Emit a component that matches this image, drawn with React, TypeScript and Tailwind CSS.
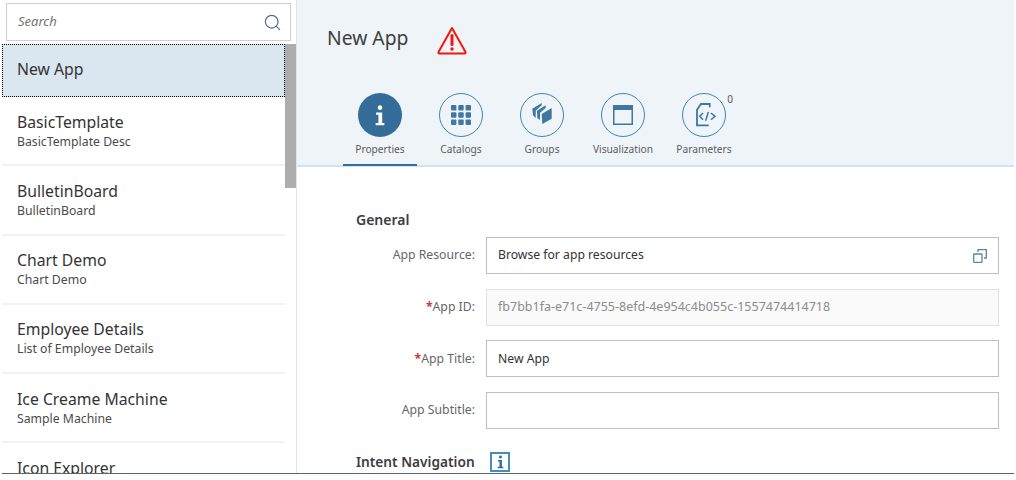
import React from 'react'
import { Search } from 'lucide-react'

const apps = [
  { title: 'BasicTemplate', sub: 'BasicTemplate Desc' },
  { title: 'BulletinBoard', sub: 'BulletinBoard' },
  { title: 'Chart Demo', sub: 'Chart Demo' },
  { title: 'Employee Details', sub: 'List of Employee Details' },
  { title: 'Ice Creame Machine', sub: 'Sample Machine' },
  { title: 'Icon Explorer', sub: '' },
]

function InfoGlyph({ className }: { className?: string }) {
  return (
    <svg viewBox="0 0 16 24" className={className} fill="currentColor">
      <circle cx="8" cy="3" r="2.6" />
      <path d="M3.500 8.500h7v12h2.500v2.500H3v-2.500h3.200v-9.500H3.500z" />
    </svg>
  )
}

function GridGlyph() {
  return (
    <svg viewBox="0 0 20 20" className="w-5 h-5" fill="currentColor">
      {[0, 7.3, 14.6].map((y) =>
        [0, 7.3, 14.6].map((x) => <rect key={`${x}-${y}`} x={x} y={y} width="5.4" height="5.4" rx="1" />),
      )}
    </svg>
  )
}

function GroupsGlyph() {
  return (
    <svg viewBox="0 0 34 34" className="w-[34px] h-[34px]" fill="currentColor">
      <path d="M7.300 10.700 16.700 5v2.300l-6 5.400v7.300l-2.700-2.700z" />
      <path d="M12 12.700 20.700 7.300v2.700l-5.700 4.700v7.300l-2.700-2z" />
      <path d="M16.700 16 26.700 10v10.700L17.300 26z" />
    </svg>
  )
}

function WindowGlyph() {
  return (
    <svg viewBox="0 0 20 20" className="w-5 h-5" fill="currentColor">
      <path d="M0 0h20v20H0zM1.500 5v13.500h17V5z" fillRule="evenodd" />
    </svg>
  )
}

function CodeGlyph() {
  return (
    <svg viewBox="0 0 34 34" className="w-[34px] h-[34px]" fill="none" stroke="currentColor" strokeWidth="1.800">
      <path d="M22.700 9.300V6H14l-4 5.700V27.300h11.700" />
      <path d="M16 15l-3.300 3.300L16 21.700M24 15l4 3.300-4 3.400M21.300 14l-2.600 8.700" strokeWidth="1.500" />
    </svg>
  )
}

const tabs = [
  { label: 'Properties', icon: <InfoGlyph className="w-[14px] h-[21px]" />, active: true },
  { label: 'Catalogs', icon: <GridGlyph /> },
  { label: 'Groups', icon: <GroupsGlyph /> },
  { label: 'Visualization', icon: <WindowGlyph /> },
  { label: 'Parameters', icon: <CodeGlyph />, count: 0 },
]

function Field({ label, required, value, muted, icon }: { label: string; required?: boolean; value?: string; muted?: boolean; icon?: boolean }) {
  return (
    <div className="flex items-center h-[37px]">
      <div className="w-[119px] text-right text-[12.25px] text-[#666666] shrink-0">
        {required && <span className="text-[#cc3b3b] font-bold">*</span>}
        {label}
      </div>
      <div className={`ml-[11px] w-[513px] h-[37px] border flex items-center justify-between pl-[11px] pr-[11px] ${muted ? 'text-[12.5px] bg-[#fafafa] border-[#e0e0e0] text-[#8c8c8c]' : 'text-[12.2px] bg-white border-[#bfbfbf] text-[#333333]'}`}>
        <span>{value}</span>
        {icon && (
          <svg viewBox="0 0 14 14" className="w-[14px] h-[14px] text-[#5b87a8]" fill="none" stroke="currentColor" strokeWidth="1.300">
            <rect x="0.700" y="5" width="8.300" height="8.300" rx="0.500" />
            <path d="M5 3V0.700h8.300V9H11" />
          </svg>
        )}
      </div>
    </div>
  )
}

export default function App() {
  return (
    <div className="w-[1016px] h-[480px] bg-white overflow-hidden font-['Noto_Sans',sans-serif] text-[#333333]">
      <div className="mx-[2px] h-[474px] flex border-b border-[#5a6470] overflow-hidden">
        <aside className="w-[295px] shrink-0 border-r border-[#e5e5e5] flex flex-col">
          <div className="pt-[3px] pl-[4px] pr-[4px] pb-[3px]">
            <div className="h-[38px] w-[285px] border border-[#cfcfcf] flex items-center justify-between pl-[11px] pr-[8px]">
              <span className="text-[13px] italic text-[#757575]">Search</span>
              <Search size={19} strokeWidth={1.5} className="text-[#4d6f8c]" />
            </div>
          </div>
          <div className="flex flex-1 min-h-0">
            <div className="w-[283px] shrink-0">
              <div className="h-[53px] bg-[#dbe7f0] border border-dotted border-black flex items-center pl-[14px] pb-[2px] text-[15.750px] text-[#333333]">
                New App
              </div>
              {apps.map((a) => (
                <div key={a.title} className="h-[69.300px] border-b-2 border-[#f2f2f2] pl-[15px] pt-[13.500px]">
                  <div className="text-[15.750px] leading-[22px] text-[#333333]">{a.title}</div>
                  <div className="text-[12.250px] leading-[17.500px] text-[#4a4a4a]">{a.sub}</div>
                </div>
              ))}
            </div>
            <div className="w-[11px] shrink-0">
              <div className="h-[144px] bg-[#adadad]" />
            </div>
          </div>
        </aside>

        <main className="flex-1 min-w-0">
          <header className="h-[167px] bg-[#eff4f9] border-b-2 border-[#d5e3f0]">
            <div className="flex items-center pl-[30px] pt-[24px] h-[84px]">
              <h1 className="text-[19.300px] text-[#3d3d3d] font-normal w-[110px] pb-[31px]">New App</h1>
              <svg viewBox="0 0 30 30" className="w-[30px] h-[30px] mb-[27px] text-[#f5170a]" fill="none" stroke="currentColor">
                <path d="M15 2 28.500 26a1 1 0 0 1-.8 1.500H2.300a1 1 0 0 1-.8-1.500z" strokeWidth="2" strokeLinejoin="round" />
                <path d="M15 9.500v9" strokeWidth="3" strokeLinecap="round" />
                <circle cx="15" cy="23" r="1.700" fill="currentColor" stroke="none" />
              </svg>
            </div>
            <nav className="flex pl-[46px] gap-[7px] pt-[9px]">
              {tabs.map((t) => (
                <div key={t.label} className={`w-[74px] h-[73px] flex flex-col items-center ${t.active ? 'border-b-2 border-[#346d9a]' : ''}`}>
                  <div className="relative">
                    <div className={`w-[44px] h-[44px] rounded-full flex items-center justify-center ${t.active ? 'bg-[#346d9a] text-white' : 'border border-[#4682b0] text-[#3f77a3]'}`}>
                      {t.icon}
                    </div>
                    {t.count !== undefined && <span className="absolute -right-[7px] top-[1px] text-[10px] leading-none text-[#555555]">{t.count}</span>}
                  </div>
                  <div className="mt-[4px] text-[10.200px] leading-[16px] text-[#5c5c5c] whitespace-nowrap">{t.label}</div>
                </div>
              ))}
            </nav>
          </header>

          <section className="pl-[59px] pt-[43px]">
            <h2 className="text-[14px] leading-[20px] font-semibold text-[#3d3d3d]">General</h2>
            <div className="mt-[7px] flex flex-col gap-[14.667px]">
              <Field label="App Resource:" value="Browse for app resources" icon />
              <Field label="App ID:" required value="fb7bb1fa-e71c-4755-8efd-4e954c4b055c-1557474414718" muted />
              <Field label="App Title:" required value="New App" />
              <Field label="App Subtitle:" />
            </div>
            <div className="flex items-center mt-[23px]">
              <h2 className="text-[13.700px] font-semibold text-[#3d3d3d] w-[134px]">Intent Navigation</h2>
              <div className="w-[20px] h-[20px] border-2 border-[#4a8bbd] flex items-center justify-center text-[#2f6c9c]">
                <InfoGlyph className="w-[9px] h-[14px]" />
              </div>
            </div>
          </section>
        </main>
      </div>
    </div>
  )
}
